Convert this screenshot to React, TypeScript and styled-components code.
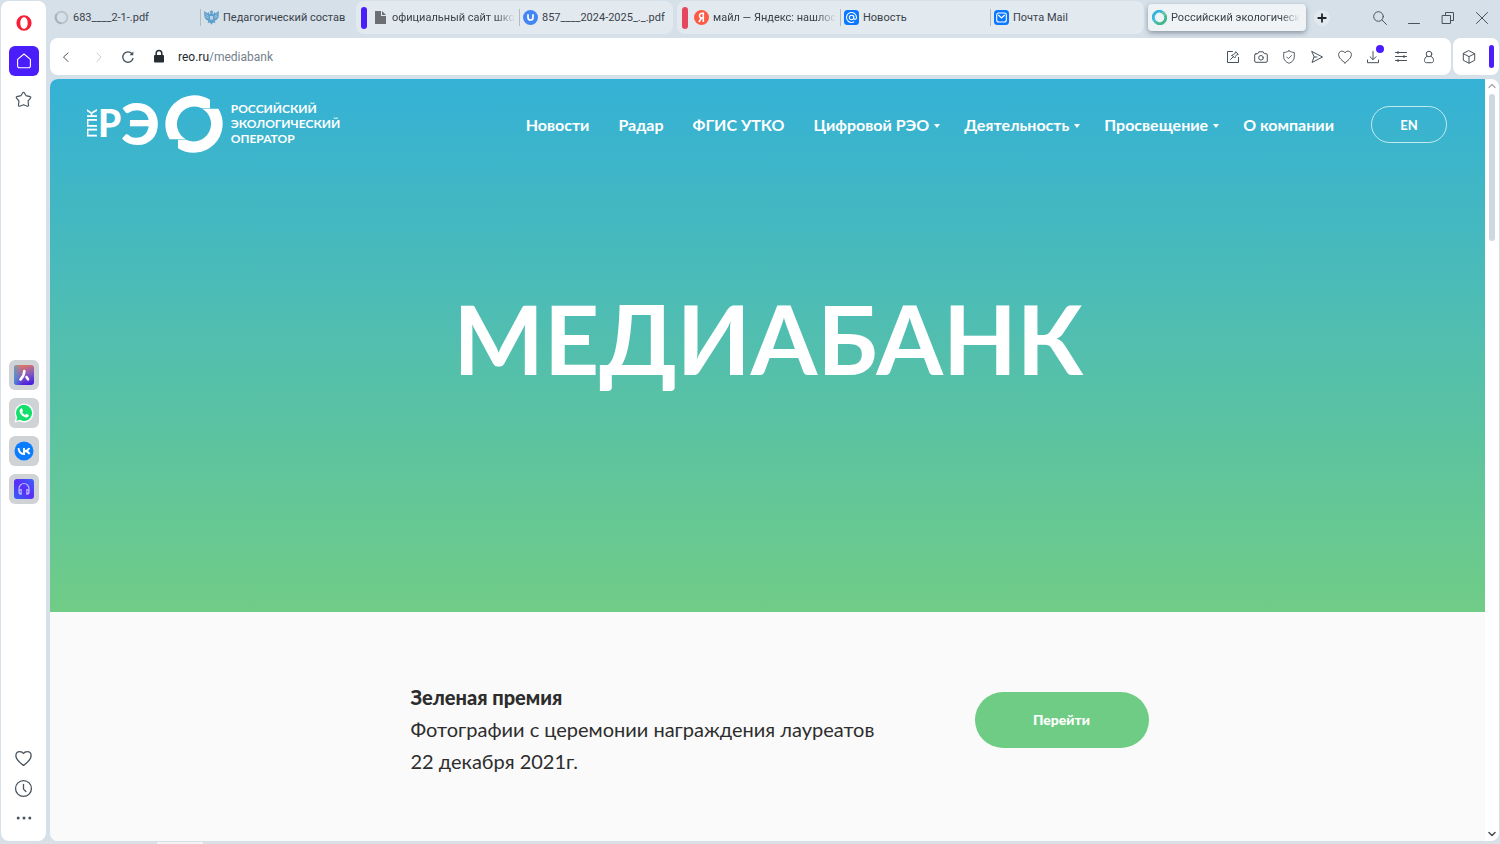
import React from "react";
import styled, { createGlobalStyle, css } from "styled-components";

const GlobalStyle = createGlobalStyle`
  *, *::before, *::after { box-sizing: border-box; }
  html, body, #root { height: 100%; }
  body { margin: 0; background: #d6e0e9; overflow: hidden; }
  button { border: 0; padding: 0; background: none; font: inherit; color: inherit; cursor: pointer; }
  a { color: inherit; text-decoration: none; }
  svg { display: block; flex: none; }
`;

const chromeFont = `Roboto, "Noto Sans", sans-serif`;
const siteFont = `Lato, "Open Sans", sans-serif`;

/* ---------- frame ---------- */

const Desktop = styled.div`
  display: flex;
  flex-direction: column;
  height: 100vh;
  font-family: ${chromeFont};
  color: #3a424a;
`;

const Browser = styled.div`
  display: flex;
  flex: 1;
  min-height: 0;
  gap: 4px;
  padding: 0 1px 1px;
`;

const Taskbar = styled.div`
  display: flex;
  flex: none;
  height: 2px;
  padding-left: 157px;
  background: #dcdfe3;
`;

const TaskbarItem = styled.div`
  width: 46px;
  background: #f3f3f4;
`;

const Main = styled.div`
  display: flex;
  flex: 1;
  flex-direction: column;
  min-width: 0;
`;

/* ---------- sidebar ---------- */

const Sidebar = styled.aside`
  display: flex;
  flex: none;
  flex-direction: column;
  align-items: center;
  justify-content: space-between;
  width: 45px;
  margin-top: 1px;
  padding: 7px 0 8px;
  border-radius: 8px;
  background: #fff;
`;

const SideGroup = styled.div<{ $gap: number; $lead?: number }>`
  display: flex;
  flex-direction: column;
  align-items: center;
  gap: ${(p) => p.$gap}px;
  padding-top: ${(p) => p.$lead ?? 0}px;
`;

const SideButton = styled.button<{ $tone?: "home" | "app" }>`
  display: flex;
  align-items: center;
  justify-content: center;
  width: 30px;
  height: 30px;
  border-radius: 6px;
  color: #4a545c;
  ${(p) => p.$tone === "home" && css`background: #4a1dfb; color: #fff;`}
  ${(p) => p.$tone === "app" && css`background: #d0d3d6;`}
`;

/* ---------- tab strip ---------- */

const TabStrip = styled.header`
  display: flex;
  flex: none;
  align-items: flex-start;
  gap: 4px;
  height: 38px;
  padding-top: 1px;
`;

const TabGroup = styled.div<{ $grouped?: boolean }>`
  display: flex;
  flex: 0 1 auto;
  align-items: center;
  min-width: 0;
  height: 33px;
  padding-right: 2px;
  border-radius: 8px;
  ${(p) => p.$grouped && css`background: #e2e9ef; padding: 0 4px 0 5px;`}
`;

const GroupMark = styled.span<{ $color: string }>`
  flex: none;
  width: 6px;
  height: 22px;
  margin-right: 2px;
  border-radius: 3px;
  background: ${(p) => p.$color};
`;

const Tab = styled.button<{ $active?: boolean; $divided?: boolean }>`
  display: flex;
  flex: 0 1 150px;
  align-items: center;
  gap: 4px;
  width: 150px;
  min-width: 0;
  height: 17px;
  padding: 0 4px 0 3px;
  border-left: 1px solid ${(p) => (p.$divided ? "#b3bac1" : "transparent")};
  ${(p) =>
    p.$active &&
    css`
      flex-basis: 158px;
      width: 158px;
      height: 27px;
      margin-top: 3px;
      padding: 0 6px 0 3px;
      border-radius: 4px;
      background: #eff3f6;
      box-shadow: 0 2px 5px rgba(60, 75, 90, 0.5);
    `}
`;

const TabLabel = styled.span<{ $fade?: boolean }>`
  flex: 1;
  min-width: 0;
  overflow: hidden;
  font-size: 11px;
  line-height: 16px;
  text-align: left;
  white-space: nowrap;
  ${(p) => p.$fade && css`mask-image: linear-gradient(to right, #000 calc(100% - 20px), transparent);`}
`;

const NewTab = styled.button`
  display: flex;
  flex: none;
  align-items: center;
  justify-content: center;
  width: 16px;
  height: 16px;
  margin: 9px 0 0 4px;
  border-radius: 8px;
  background: #e2e9ef;
  color: #1f262c;
`;

const WindowButtons = styled.div`
  display: flex;
  align-items: center;
  height: 33px;
  margin-left: auto;
`;

const WindowButton = styled.button`
  display: flex;
  align-items: center;
  justify-content: center;
  width: 34px;
  height: 33px;
  color: #4a535b;
`;

/* ---------- address row ---------- */

const AddressRow = styled.div`
  display: flex;
  flex: none;
  gap: 2px;
  height: 37px;
  margin-bottom: 4px;
`;

const AddressBar = styled.div`
  display: flex;
  flex: 1;
  align-items: center;
  min-width: 0;
  padding: 0 8px 0 2px;
  border-radius: 8px;
  background: #fff;
`;

const BarButton = styled.button<{ $muted?: boolean; $wide?: boolean }>`
  display: flex;
  flex: none;
  align-items: center;
  justify-content: center;
  position: relative;
  width: ${(p) => (p.$wide ? 34 : 28)}px;
  height: 28px;
  color: ${(p) => (p.$muted ? "#c9ced3" : "#48525a")};
`;

const Badge = styled.span`
  position: absolute;
  top: 2px;
  right: 3px;
  width: 8px;
  height: 8px;
  border-radius: 4px;
  background: #4a1dfb;
`;

const Address = styled.button`
  flex: 1;
  margin-left: 2px;
  font-size: 12px;
  line-height: 18px;
  text-align: left;
  color: #22292f;
`;

const AddressPath = styled.span`
  color: #74808b;
`;

const Extensions = styled.div`
  display: flex;
  flex: none;
  align-items: center;
  justify-content: space-between;
  width: 46px;
  padding: 0 5px 0 2px;
  border-radius: 8px;
  background: #fff;
`;

const ExtensionMark = styled.span`
  width: 5px;
  height: 23px;
  border-radius: 3px;
  background: #4a1dfb;
`;

/* ---------- page ---------- */

const Viewport = styled.div`
  display: flex;
  flex: 1;
  min-height: 0;
  overflow: hidden;
  border-radius: 8px;
  background: #fff;
`;

const Page = styled.main`
  flex: 1;
  min-width: 0;
  overflow: hidden;
  background: #fafafa;
  font-family: ${siteFont};
`;

const ScrollTrack = styled.div`
  display: flex;
  flex: none;
  flex-direction: column;
  align-items: center;
  justify-content: space-between;
  width: 14px;
  padding: 3px 0;
  color: #4c5257;
`;

const ScrollTop = styled.div`
  display: flex;
  flex-direction: column;
  align-items: center;
  gap: 4px;
  color: #a3a8ac;
`;

const ScrollThumb = styled.span`
  width: 6px;
  height: 147px;
  border-radius: 3px;
  background: #cdd8e2;
`;

const Hero = styled.section`
  height: 533px;
  background: linear-gradient(#34b1d6, #70cc86);
  color: #fff;
`;

const SiteHeader = styled.div`
  display: flex;
  align-items: center;
  justify-content: space-between;
  height: 92px;
  padding: 0 38px 0 36px;
`;

const Logo = styled.a`
  display: flex;
  align-items: center;
  padding-bottom: 3px;
  font-weight: 900;
`;

const LogoSide = styled.span`
  width: 12px;
  font-size: 13px;
  font-weight: 700;
  line-height: 12px;
  writing-mode: vertical-rl;
  transform: rotate(180deg);
`;

const LogoLetter = styled.span<{ $size: number }>`
  padding-bottom: 2px;
  font-size: ${(p) => p.$size}px;
  line-height: 56px;
`;

const LogoRing = styled.svg`
  width: 58px;
  height: 58px;
  margin: 0 8px 0 5px;
`;

const LogoName = styled.span`
  font-size: 12px;
  font-weight: 700;
  line-height: 15px;
`;

const Nav = styled.nav`
  display: flex;
  align-items: center;
  gap: 29px;
  padding-bottom: 1px;
  font-size: 16px;
  font-weight: 700;
  line-height: 24px;
  white-space: nowrap;
`;

const NavLink = styled.a<{ $menu?: boolean }>`
  display: flex;
  align-items: center;
  ${(p) =>
    p.$menu &&
    css`
      margin-right: -5px;
      &::after {
        content: "";
        margin: 3px 0 0 5px;
        border: 3px solid transparent;
        border-top: 4px solid #fff;
        border-bottom: 0;
      }
    `}
`;

const LanguageButton = styled.button`
  width: 76px;
  height: 37px;
  margin-left: 8px;
  border: 1px solid rgba(255, 255, 255, 0.7);
  border-radius: 19px;
  font-size: 13px;
`;

const Title = styled.h1`
  margin: 103px 0 0;
  padding-left: 2px;
  font-size: 96px;
  font-weight: 700;
  line-height: 128px;
  text-align: center;
`;

const Entries = styled.section`
  display: flex;
  justify-content: center;
  padding: 69px 0 0 24px;
`;

const Entry = styled.article`
  display: flex;
  align-items: flex-start;
  justify-content: space-between;
  width: 738px;
`;

const EntryText = styled.div`
  width: 480px;
  font-size: 20px;
  line-height: 32px;
  color: #2d2d2d;
`;

const EntryHeading = styled.h2`
  margin: 0;
  font-size: 20px;
  font-weight: 900;
  line-height: 32px;
`;

const EntryLine = styled.p`
  margin: 0;
`;

const GoButton = styled.a`
  width: 174px;
  margin-top: 11px;
  border-radius: 28px;
  background: #6fcc85;
  color: #fff;
  font-size: 14px;
  font-weight: 900;
  line-height: 56px;
  text-align: center;
`;

/* ---------- drawings ---------- */

const Line = ({ size = 16, width = 1, children }: { size?: number; width?: number; children: React.ReactNode }) => (
  <svg width={size} height={size} viewBox="0 0 16 16" fill="none" stroke="currentColor" strokeWidth={width} strokeLinecap="round" strokeLinejoin="round" aria-hidden="true">
    {children}
  </svg>
);

const heart = "M8 13.8C5.6 12 1.6 9 1.6 5.6C1.6 3.5 3.1 2.2 4.8 2.2C6.2 2.2 7.4 2.6 8 3.8C8.6 2.6 9.8 2.2 11.2 2.2C12.9 2.2 14.4 3.5 14.4 5.6C14.4 9 10.4 12 8 13.8Z";

const OperaIcon = () => (
  <svg width="16" height="16" viewBox="0 0 16 16" aria-hidden="true">
    <path fill="#fa1e34" fillRule="evenodd" d="M8 .2a7.6 7.8 0 1 0 0 15.6A7.6 7.8 0 1 0 8 .2ZM8 2.200c2.300 0 3.700 2.400 3.700 5.800S10.300 13.800 8 13.800 4.300 11.400 4.300 8 5.700 2.200 8 2.200Z" />
  </svg>
);

const AriaIcon = () => (
  <svg width="20" height="20" viewBox="0 0 20 20" aria-hidden="true">
    <defs>
      <linearGradient id="aria" x1="0.300" y1="0" x2="0.600" y2="1">
        <stop offset="0" stopColor="#ee7658" />
        <stop offset="0.500" stopColor="#8a5fb8" />
        <stop offset="1" stopColor="#4a20e0" />
      </linearGradient>
      <linearGradient id="ariaSide" x1="0" x2="1">
        <stop offset="0" stopColor="#3aa6e0" stopOpacity="0.7" />
        <stop offset="0.400" stopColor="#3aa6e0" stopOpacity="0" />
      </linearGradient>
    </defs>
    <rect width="20" height="20" rx="3" fill="url(#aria)" />
    <rect width="20" height="20" rx="3" fill="url(#ariaSide)" />
    <path d="M10.300 6C10.400 9.500 8.800 12 6.500 14.500M12.500 12L14 14.300" fill="none" stroke="#fff" strokeWidth="2.600" strokeLinecap="round" />
  </svg>
);

const WhatsAppIcon = () => (
  <svg width="20" height="20" viewBox="0 0 20 20" aria-hidden="true">
    <path d="M.5 19.500L1.900 14.600A9.400 9.400 0 1 1 5.500 18.200Z" fill="#fff" />
    <path d="M2.300 17.700L3.300 14.200A8 8 0 1 1 6 16.800Z" fill="#12e06b" />
    <path d="M7 5.500c.4-.3 1-.2 1.200.3l.7 1.600c.1.400 0 .7-.8 1.500.8 1.500 1.700 2.300 3.200 3 .8-1 1.100-1.200 1.500-1l1.600.8c.5.300.5.800.3 1.300-.5 1.200-1.700 1.700-3 1.400C8.500 13.600 6 11 5.600 8.400 5.400 7.200 6 6 7 5.500Z" fill="#fff" />
  </svg>
);

const VkIcon = () => (
  <svg width="20" height="20" viewBox="0 0 20 20" aria-hidden="true">
    <circle cx="10" cy="10" r="9.500" fill="#0a7cff" />
    <path d="M4.500 7C4.800 11 6.800 13 10 13V7M15.300 7C14.500 9 13 10 10.500 10C13 10.200 14.800 11.400 15.500 13" fill="none" stroke="#fff" strokeWidth="1.900" />
  </svg>
);

const PlayerIcon = () => (
  <svg width="20" height="20" viewBox="0 0 20 20" aria-hidden="true">
    <defs>
      <linearGradient id="player" x1="0" y1="1" x2="1" y2="0">
        <stop offset="0" stopColor="#2f62fa" />
        <stop offset="0.500" stopColor="#5b2df5" />
        <stop offset="1" stopColor="#3a63fa" />
      </linearGradient>
    </defs>
    <rect width="20" height="20" rx="3" fill="url(#player)" />
    <path d="M7.200 15.200C4.500 14 4.800 11 5 9.500a5 5 0 0 1 10 0c.2 1.500.5 4.500-2.200 5.700M7.200 10.500v4.700c-1.600 0-2.200-1-2.200-2.300s.8-2.400 2.200-2.400ZM12.800 10.500v4.700c1.600 0 2.200-1 2.200-2.300s-.8-2.400-2.200-2.400Z" fill="none" stroke="#b7b4ff" strokeWidth="1.200" />
  </svg>
);

const SpinnerIcon = () => (
  <svg width="15" height="15" viewBox="0 0 15 15" fill="none" aria-hidden="true">
    <circle cx="7.500" cy="7.500" r="5.800" stroke="#bcc4cb" strokeWidth="2" />
    <path d="M2.800 4.100A5.800 5.800 0 0 0 7.500 13.300" stroke="#a9b1b9" strokeWidth="2" />
  </svg>
);

const CrestIcon = () => (
  <svg width="15" height="15" viewBox="0 0 15 15" aria-hidden="true">
    <path d="M6 1.500L7.500.3 9 1.500 8.500 3.500 9.500 4.500 10 2 11.500 3.200 15 1 14.500 7.500 12.500 10 10.800 10.500 11.300 13 9 12.500 7.500 14.800 6 12.500 3.700 13 4.200 10.500 2.500 10 .5 7.500 0 1 3.500 3.200 5 2 5.500 4.500 6.500 3.500Z" fill="#5f9fcb" />
    <path d="M1.500 4l3 2.500M1.500 6.500l3 1.500M13.500 4l-3 2.500M13.500 6.500l-3 1.500" stroke="#d6e0e9" strokeWidth=".6" />
    <path d="M6 6h3v3L7.500 10.300 6 9Z" fill="#b9d6e8" />
  </svg>
);

const DocumentIcon = () => (
  <svg width="15" height="15" viewBox="0 0 15 15" aria-hidden="true">
    <path d="M2 1H8V6H13V14H2ZM9 1L13 5H9Z" fill="#6b6f73" />
  </svg>
);

const UIcon = () => (
  <svg width="15" height="15" viewBox="0 0 15 15" aria-hidden="true">
    <circle cx="7.500" cy="7.500" r="7.500" fill="#4285f4" />
    <path d="M5 4.200V7.500a2.500 2.500 0 0 0 5 0V4.200" fill="none" stroke="#fff" strokeWidth="1.700" />
  </svg>
);

const YandexIcon = () => (
  <svg width="15" height="15" viewBox="0 0 15 15" aria-hidden="true">
    <circle cx="7.500" cy="7.500" r="7.500" fill="#fc5a45" />
    <path d="M9.300 12V3.300H8.200C6.400 3.300 5.500 4.300 5.500 5.700S6.500 8 8 8H9.300M7.400 8L5 12" fill="none" stroke="#fff" strokeWidth="1.600" />
  </svg>
);

const AtIcon = () => (
  <svg width="15" height="15" viewBox="0 0 15 15" fill="none" stroke="#fff" aria-hidden="true">
    <rect width="15" height="15" rx="3.500" fill="#0a77ff" stroke="none" />
    <circle cx="7.500" cy="7.500" r="2.200" strokeWidth="1.100" />
    <path d="M9.700 5.500V8.200C9.700 10 12.500 9.800 12.500 7.500A5 5 0 1 0 10.300 11.600" strokeWidth="1.100" />
  </svg>
);

const MailIcon = () => (
  <svg width="15" height="15" viewBox="0 0 15 15" fill="none" stroke="#fff" aria-hidden="true">
    <rect width="15" height="15" rx="3.500" fill="#0a77ff" stroke="none" />
    <rect x="2.700" y="3" width="9.600" height="9" rx="2" strokeWidth="1.100" />
    <path d="M4.300 5L7.500 8 10.700 5" strokeWidth="1.200" />
  </svg>
);

const ReoIcon = () => (
  <svg width="15" height="15" viewBox="0 0 15 15" fill="none" strokeWidth="2.800" aria-hidden="true">
    <path d="M10.500 2.200A6 6 0 0 0 2 10" stroke="#35b5dc" />
    <path d="M2 10A6 6 0 0 0 5 13" stroke="#49bfc4" />
    <path d="M4.500 12.800A6 6 0 0 0 13 5" stroke="#45b98d" />
    <path d="M13 5A6 6 0 0 0 10.500 2.200" stroke="#5fc4a0" />
  </svg>
);

const sideApps = [
  { name: "Aria", icon: <AriaIcon /> },
  { name: "WhatsApp", icon: <WhatsAppIcon /> },
  { name: "VK", icon: <VkIcon /> },
  { name: "Player", icon: <PlayerIcon /> },
];

const tools = [
  { name: "Edit", icon: <Line><path d="M7.500 2.500H2.500V13.500H13.500V8.500M5.500 10.500L8.300 7.700M7 6.300L9.700 9C10.800 8 10.300 7 11.300 6.200L13.300 5.300 10.700 2.700 9.800 4.700C9 5.700 8 5.200 7 6.300Z" /></Line> },
  { name: "Snapshot", icon: <Line><path d="M3 4.700H4.700L5.800 2.800H10.200L11.300 4.700H13A1.300 1.300 0 0 1 14.300 6V12A1.300 1.300 0 0 1 13 13.300H3A1.300 1.300 0 0 1 1.700 12V6A1.300 1.300 0 0 1 3 4.700Z" /><circle cx="8" cy="8.800" r="2.300" /></Line> },
  { name: "Protection", icon: <Line width={0.9}><path d="M8 1.800C9.500 3 11.500 3.400 13.300 3.400V8C13.300 11 11 13.200 8 14.300 5 13.200 2.700 11 2.700 8V3.400C4.500 3.400 6.500 3 8 1.800ZM5.700 8L7.400 9.700 10.500 6.500" /></Line> },
  { name: "Flow", icon: <Line><path d="M3 2.500L13.500 8 3 13.500 5 8ZM5 8H8" /></Line> },
  { name: "Bookmark", icon: <Line><path d={heart} /></Line> },
  { name: "Downloads", badge: true, icon: <Line><path d="M8 2.500V10.500M5 7.700L8 10.700 11 7.700M2.500 11V13.700H13.500V11" /></Line> },
  { name: "Easy setup", icon: <Line width={1.2}><path d="M2.500 3.500H13.500M2.500 7.500H13.500M2.500 11.500H13.500M5 2.500V4.500M11 6.500V8.500M5 10.500V12.500" /></Line> },
  { name: "Profile", icon: <Line><circle cx="8" cy="5" r="2.800" /><path d="M6 7.300C4 8.200 3.500 10 3.500 11.500 3.500 13 4.300 13.700 5.500 13.700H10.500C11.700 13.700 12.500 13 12.500 11.500 12.500 10 12 8.200 10 7.300" /></Line> },
];

const navItems = [
  { text: "Новости" },
  { text: "Радар" },
  { text: "ФГИС УТКО" },
  { text: "Цифровой РЭО", menu: true },
  { text: "Деятельность", menu: true },
  { text: "Просвещение", menu: true },
  { text: "О компании" },
];

export default function App() {
  return (
    <Desktop>
      <GlobalStyle />
      <Browser>
        <Sidebar>
          <SideGroup $gap={8}>
            <SideButton aria-label="Opera"><OperaIcon /></SideButton>
            <SideButton $tone="home" aria-label="Home">
              <Line size={18}><path d="M8 1.800L13.700 6.500V12.500a1.500 1.500 0 0 1-1.500 1.500H3.800a1.500 1.500 0 0 1-1.500-1.500V6.500Z" /></Line>
            </SideButton>
            <SideButton aria-label="Bookmarks">
              <Line size={17} width={1.1}><path d="M7.300 1.600Q8 .9 8.700 1.600L10.300 4.300 14.200 5.300Q15.200 5.700 14.600 6.600L12.300 9.400 12.700 13.500Q12.600 14.600 11.600 14.300L8 13 4.400 14.300Q3.400 14.600 3.300 13.500L3.700 9.400 1.400 6.600Q.8 5.700 1.800 5.300L5.700 4.300Z" /></Line>
            </SideButton>
          </SideGroup>
          <SideGroup $gap={8} $lead={7}>
            {sideApps.map((app) => (
              <SideButton key={app.name} $tone="app" aria-label={app.name}>{app.icon}</SideButton>
            ))}
          </SideGroup>
          <SideGroup $gap={0}>
            <SideButton aria-label="Favourites"><Line size={19} width={1.1}><path d={heart} /></Line></SideButton>
            <SideButton aria-label="History">
              <Line size={19} width={1.1}><circle cx="8" cy="8" r="6.700" /><path d="M8 4.500V8.500L10 10.500" /></Line>
            </SideButton>
            <SideButton aria-label="More">
              <svg width="16" height="16" viewBox="0 0 16 16" fill="currentColor" aria-hidden="true">
                <circle cx="2.200" cy="8" r="1.500" /><circle cx="8" cy="8" r="1.500" /><circle cx="13.800" cy="8" r="1.500" />
              </svg>
            </SideButton>
          </SideGroup>
        </Sidebar>

        <Main>
          <TabStrip>
            <TabGroup>
              <Tab><SpinnerIcon /><TabLabel>683____2-1-.pdf</TabLabel></Tab>
              <Tab $divided><CrestIcon /><TabLabel>Педагогический состав</TabLabel></Tab>
            </TabGroup>
            <TabGroup $grouped>
              <GroupMark $color="#4a1dfb" />
              <Tab><DocumentIcon /><TabLabel $fade>официальный сайт школы</TabLabel></Tab>
              <Tab $divided><UIcon /><TabLabel>857____2024-2025_._.pdf</TabLabel></Tab>
            </TabGroup>
            <TabGroup $grouped>
              <GroupMark $color="#e5485d" />
              <Tab><YandexIcon /><TabLabel $fade>майл — Яндекс: нашлось</TabLabel></Tab>
              <Tab $divided><AtIcon /><TabLabel>Новость</TabLabel></Tab>
              <Tab $divided><MailIcon /><TabLabel>Почта Mail</TabLabel></Tab>
            </TabGroup>
            <Tab $active><ReoIcon /><TabLabel $fade>Российский экологический</TabLabel></Tab>
            <NewTab aria-label="New tab"><Line size={12} width={2.4}><path d="M8 3V13M3 8H13" /></Line></NewTab>
            <WindowButtons>
              <WindowButton aria-label="Search tabs"><Line><circle cx="6.500" cy="6.500" r="4.800" /><path d="M10 10L14.500 14.500" /></Line></WindowButton>
              <WindowButton aria-label="Minimize"><Line><path d="M2.500 13.500H13.500" /></Line></WindowButton>
              <WindowButton aria-label="Restore"><Line><path d="M2.500 5.500H10.500V13.500H2.500ZM5.500 5.500V2.500H13.500V10.500H10.500" /></Line></WindowButton>
              <WindowButton aria-label="Close"><Line><path d="M2.500 2.500L13.500 13.500M13.500 2.500L2.500 13.500" /></Line></WindowButton>
            </WindowButtons>
          </TabStrip>

          <AddressRow>
            <AddressBar>
              <BarButton aria-label="Back"><Line><path d="M10 4L5.500 8 10 12.500" /></Line></BarButton>
              <BarButton $muted $wide aria-label="Forward"><Line><path d="M8 4L12 8 8 12.500" /></Line></BarButton>
              <BarButton aria-label="Reload">
                <Line width={1.3}><path d="M13 9.500A5.200 5.200 0 1 1 12 4.700" /><path d="M13.300 2.500V6.300H9.500Z" fill="currentColor" stroke="none" /></Line>
              </BarButton>
              <BarButton $wide aria-label="Site information">
                <svg width="16" height="16" viewBox="0 0 16 16" aria-hidden="true">
                  <rect x="3" y="6" width="10" height="7.500" rx="1" fill="#252c32" />
                  <path d="M5.200 7V4.300a2.800 2.800 0 0 1 5.600 0V7" fill="none" stroke="#252c32" strokeWidth="1.500" />
                </svg>
              </BarButton>
              <Address>reo.ru<AddressPath>/mediabank</AddressPath></Address>
              {tools.map((tool) => (
                <BarButton key={tool.name} aria-label={tool.name}>
                  {tool.icon}
                  {tool.badge && <Badge />}
                </BarButton>
              ))}
            </AddressBar>
            <Extensions>
              <BarButton aria-label="Extensions">
                <Line><path d="M8 1.800L13.700 4.700V11.300L8 14.200 2.300 11.300V4.700ZM2.300 4.700L8 7.600 13.700 4.700M8 7.600V14.200" /></Line>
              </BarButton>
              <ExtensionMark />
            </Extensions>
          </AddressRow>

          <Viewport>
            <Page>
              <Hero>
                <SiteHeader>
                  <Logo href="#">
                    <LogoSide>ППК</LogoSide>
                    <LogoLetter $size={37}>Р</LogoLetter>
                    <LogoLetter $size={58}>Э</LogoLetter>
                    <LogoRing viewBox="0 0 58 58" fill="#fff" aria-hidden="true">
                      <path d="M45 4.800A29 29 0 0 0 4.600 44.300H20.800A17.500 17.500 0 0 1 37 13.300H45Z" />
                      <path d="M13 53.200A29 29 0 0 0 53.400 13.700H37.200A17.500 17.500 0 0 1 21 44.700H13Z" />
                    </LogoRing>
                    <LogoName>РОССИЙСКИЙ<br />ЭКОЛОГИЧЕСКИЙ<br />ОПЕРАТОР</LogoName>
                  </Logo>
                  <Nav>
                    {navItems.map((item) => (
                      <NavLink key={item.text} href="#" $menu={item.menu}>{item.text}</NavLink>
                    ))}
                    <LanguageButton>EN</LanguageButton>
                  </Nav>
                </SiteHeader>
                <Title>МЕДИАБАНК</Title>
              </Hero>
              <Entries>
                <Entry>
                  <EntryText>
                    <EntryHeading>Зеленая премия</EntryHeading>
                    <EntryLine>Фотографии с церемонии награждения лауреатов<br />22 декабря 2021г.</EntryLine>
                  </EntryText>
                  <GoButton href="#">Перейти</GoButton>
                </Entry>
              </Entries>
            </Page>
            <ScrollTrack>
              <ScrollTop>
                <Line size={8} width={2.6}><path d="M2 11L8 5 14 11" /></Line>
                <ScrollThumb />
              </ScrollTop>
              <Line size={8} width={3.2}><path d="M2 5L8 11 14 5" /></Line>
            </ScrollTrack>
          </Viewport>
        </Main>
      </Browser>
      <Taskbar><TaskbarItem /></Taskbar>
    </Desktop>
  );
}
